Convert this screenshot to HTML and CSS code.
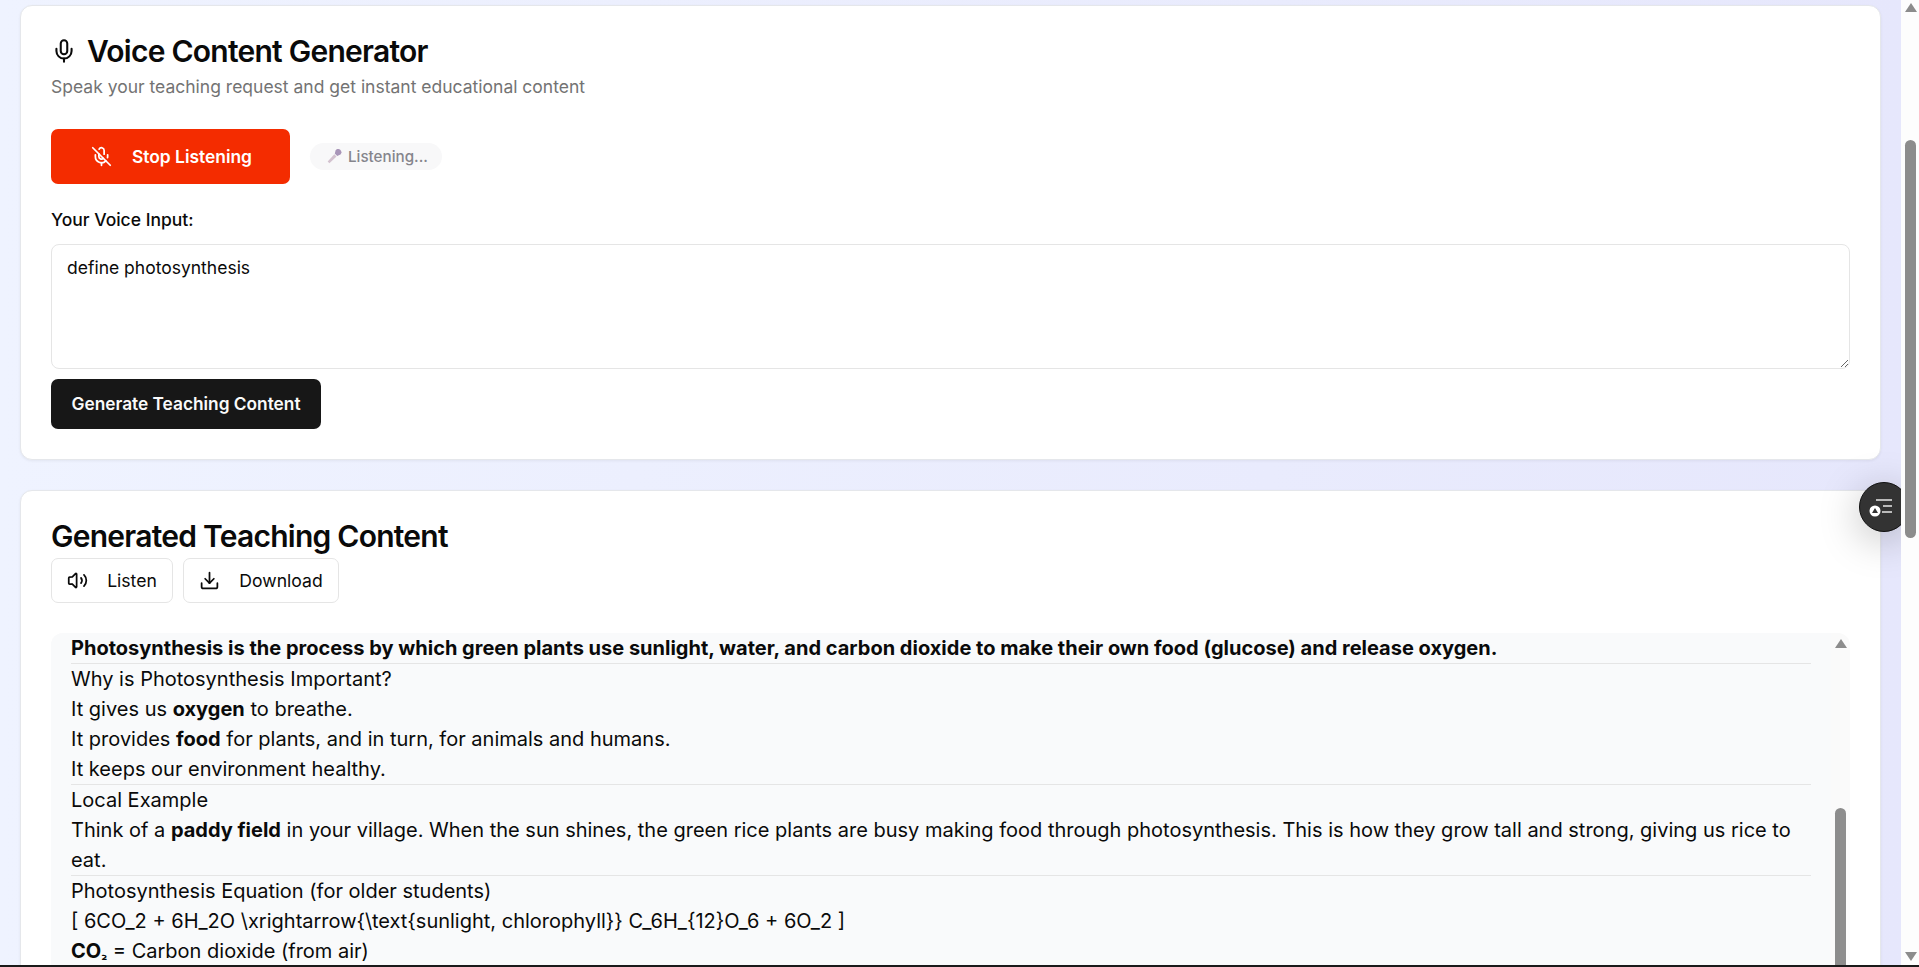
FILE: index.html
```html
<!DOCTYPE html>
<html lang="en">
<head>
  <meta charset="UTF-8" />
  <title>Voice Content Generator</title>
  <link rel="stylesheet" href="styles.css">
</head>
<body>
  <div class="page">
    <main class="content">
      <section class="card card-voice">
        <h1 class="title">
          <svg class="icon-title" viewBox="0 0 24 24"><path d="M12 2a3 3 0 0 0-3 3v7a3 3 0 0 0 6 0V5a3 3 0 0 0-3-3Z"/><path d="M19 10v2a7 7 0 0 1-14 0v-2"/><path d="M12 19v3"/></svg>
          Voice Content Generator
        </h1>
        <p class="subtitle">Speak your teaching request and get instant educational content</p>

        <div class="controls">
          <button class="btn-stop">
            <svg class="icon" viewBox="0 0 24 24"><path d="m2 2 20 20"/><path d="M18.89 13.23A7.12 7.12 0 0 0 19 12v-2"/><path d="M5 10v2a7 7 0 0 0 12 5"/><path d="M15 9.34V5a3 3 0 0 0-5.68-1.33"/><path d="M9 9v3a3 3 0 0 0 5.12 2.12"/><path d="M12 19v3"/></svg>
            Stop Listening
          </button>
          <span class="status">
            <svg class="icon-mic" viewBox="0 0 16 16"><path class="mic-head" d="M9.600 1.200a3.200 3.200 0 0 1 4.900 4.200L11.200 7 8.800 4.600Z"/><path class="mic-body" d="M8.300 5.300l2.200 2.200-7.100 6.700-1.700-1.700Z"/></svg>
            Listening...
          </span>
        </div>

        <label class="field-label" for="voiceInput">Your Voice Input:</label>
        <textarea id="voiceInput" class="voice-input">define photosynthesis</textarea>
        <button class="btn-generate">Generate Teaching Content</button>
      </section>

      <section class="card card-result">
        <h2 class="result-title">Generated Teaching Content</h2>
        <div class="actions">
          <button class="btn-outline btn-listen">
            <svg class="icon" viewBox="0 0 24 24"><path d="M11 4.700a.7.7 0 0 0-1.200-.5L6.400 7.600A1.400 1.400 0 0 1 5.400 8H3a1 1 0 0 0-1 1v6a1 1 0 0 0 1 1h2.400a1.400 1.400 0 0 1 1 .4l3.400 3.400a.7.7 0 0 0 1.200-.5Z"/><path d="M16 9a5 5 0 0 1 0 6"/><path d="M19.400 18.400a9 9 0 0 0 0-12.800"/></svg>
            Listen
          </button>
          <button class="btn-outline btn-download">
            <svg class="icon" viewBox="0 0 24 24"><path d="M12 15V3"/><path d="M21 15v4a2 2 0 0 1-2 2H5a2 2 0 0 1-2-2v-4"/><path d="m7 10 5 5 5-5"/></svg>
            Download
          </button>
        </div>

        <div class="output">
          <div class="output-text">
            <div class="block"><strong>Photosynthesis is the process by which green plants use sunlight, water, and carbon dioxide to make their own food (glucose) and release oxygen.</strong></div>
            <div class="block">
              <p>Why is Photosynthesis Important?</p>
              <p>It gives us <strong>oxygen</strong> to breathe.</p>
              <p>It provides <strong>food</strong> for plants, and in turn, for animals and humans.</p>
              <p>It keeps our environment healthy.</p>
            </div>
            <div class="block">
              <p>Local Example</p>
              <p>Think of a <strong>paddy field</strong> in your village. When the sun shines, the green rice plants are busy making food through photosynthesis. This is how they grow tall and strong, giving us rice to eat.</p>
            </div>
            <div class="block">
              <p>Photosynthesis Equation (for older students)</p>
              <p>[ 6CO_2 + 6H_2O \xrightarrow{\text{sunlight, chlorophyll}} C_6H_{12}O_6 + 6O_2 ]</p>
              <p><strong>CO<span class="sub">₂</span></strong> = Carbon dioxide (from air)</p>
            </div>
          </div>
          <div class="output-scroll">
            <span class="arrow-up"></span>
            <span class="output-thumb"></span>
          </div>
        </div>
      </section>
    </main>

    <div class="page-scroll">
      <span class="arrow-up"></span>
      <span class="page-thumb"></span>
      <span class="arrow-down"></span>
    </div>

    <button class="fab">
      <svg viewBox="0 0 34 34"><path class="fab-lines" d="M9 10h16M16 16h9M15 22h10"/><circle class="fab-dot" cx="8" cy="21" r="5.500"/><path class="fab-tri" d="M8 18l3 5H5Z"/></svg>
    </button>
  </div>
</body>
</html>
```

FILE: styles.css
```css
* {
  margin: 0;
  padding: 0;
  box-sizing: border-box;
}
html, body {
  height: 967px;
  overflow: hidden;
}
body {
  font-family: Inter, "Noto Sans", sans-serif;
  color: #0a0a0a;
  background: #fff;
}
.page {
  position: relative;
  display: flex;
  height: 967px;
  border-bottom: 2px solid #1a1a1a;
  overflow: hidden;
}
.content {
  flex: 1;
  min-width: 0;
  padding: 5px 20px 0 20px;
  background: linear-gradient(90deg, #eff3ff, #e6e7fc);
}
.card {
  background: #fff;
  border: 1px solid #e5e7eb;
  border-radius: 12px;
  box-shadow: 0 1px 3px rgba(0, 0, 0, 0.06);
  padding: 0 30px;
}
.card-voice {
  height: 455px;
  margin-bottom: 30px;
  padding-top: 27px;
}
.card-result {
  height: 600px;
  padding-top: 27px;
}
.title {
  display: flex;
  align-items: center;
  gap: 10px;
  font-size: 30px;
  line-height: 36px;
  font-weight: 600;
  letter-spacing: -0.75px;
}
.icon-title {
  width: 26px;
  height: 26px;
  fill: none;
  stroke: currentColor;
  stroke-width: 1.900;
  stroke-linecap: round;
  stroke-linejoin: round;
}
.icon {
  width: 21px;
  height: 21px;
  fill: none;
  stroke: currentColor;
  stroke-width: 2;
  stroke-linecap: round;
  stroke-linejoin: round;
}
.subtitle {
  margin-top: 5px;
  font-size: 17.5px;
  line-height: 26px;
  color: #737373;
}
.controls {
  display: flex;
  align-items: center;
  gap: 20px;
  margin-top: 29px;
}
button {
  font-family: inherit;
  border: none;
}
.btn-stop {
  display: flex;
  align-items: center;
  justify-content: center;
  gap: 20px;
  width: 239px;
  height: 55px;
  padding-left: 2px;
  border-radius: 7px;
  background: #f42c00;
  color: #fff;
  font-size: 17.4px;
  font-weight: 600;
}
.status {
  display: flex;
  align-items: center;
  gap: 6px;
  height: 27px;
  padding: 0 14px 0 16px;
  border-radius: 14px;
  background: #f8f8f9;
  color: #85858c;
  font-size: 15.2px;
  font-weight: 500;
}
.icon-mic {
  width: 16px;
  height: 16px;
}
.mic-head {
  fill: #a895b8;
}
.mic-body {
  fill: #d3c2cf;
}
.field-label {
  display: block;
  margin-top: 23px;
  font-size: 17.5px;
  line-height: 26px;
  font-weight: 500;
}
.voice-input {
  display: block;
  width: 100%;
  height: 125px;
  margin-top: 11px;
  padding: 11px 15px;
  border: 1px solid #e5e5e5;
  border-radius: 8px;
  font-family: inherit;
  font-size: 17.5px;
  line-height: 24px;
  color: #0a0a0a;
  outline: none;
}
.btn-generate {
  display: block;
  width: 270px;
  height: 50px;
  margin-top: 10px;
  padding-bottom: 1px;
  border-radius: 7px;
  background: #171717;
  color: #fafafa;
  font-size: 17.3px;
  font-weight: 600;
}
.result-title {
  font-size: 30px;
  line-height: 36px;
  font-weight: 600;
  letter-spacing: -0.75px;
}
.actions {
  display: flex;
  gap: 10px;
  margin-top: 4px;
}
.btn-outline {
  display: flex;
  align-items: center;
  justify-content: center;
  gap: 19px;
  height: 45px;
  border: 1px solid #e5e5e5;
  border-radius: 7px;
  background: #fff;
  color: #0a0a0a;
  font-size: 17.6px;
  font-weight: 400;
}
.btn-listen {
  width: 122px;
}
.btn-download {
  width: 156px;
}
.output {
  display: flex;
  height: 420px;
  margin-top: 30px;
  border-radius: 12px 12px 0 0;
  background: #fafafa;
  overflow: hidden;
}
.output-text {
  flex: 1;
  min-width: 0;
  padding: 0 20px;
  background: #f9fafb;
  font-size: 20px;
  line-height: 30px;
}
.block {
  border-bottom: 1px solid #e5e5e5;
}
.sub {
  font-size: 13px;
}
.output-scroll {
  position: relative;
  width: 19px;
  flex-shrink: 0;
}
.output-scroll .arrow-up {
  position: absolute;
  top: 6px;
  left: 4px;
}
.output-thumb {
  position: absolute;
  top: 175px;
  left: 4px;
  width: 11px;
  height: 400px;
  border-radius: 6px;
  background: #8c8c8c;
}
.page-scroll {
  position: relative;
  width: 18px;
  flex-shrink: 0;
  background: #fdfdfd;
}
.page-scroll .arrow-up {
  position: absolute;
  top: 3px;
  left: 4px;
}
.page-scroll .arrow-down {
  position: absolute;
  top: 952px;
  left: 4px;
}
.page-thumb {
  position: absolute;
  top: 140px;
  left: 4px;
  width: 11px;
  height: 398px;
  border-radius: 6px;
  background: #8c8c8c;
}
.arrow-up {
  width: 0;
  height: 0;
  border-left: 6px solid transparent;
  border-right: 6px solid transparent;
  border-bottom: 9px solid #8c8c8c;
}
.arrow-down {
  width: 0;
  height: 0;
  border-left: 6px solid transparent;
  border-right: 6px solid transparent;
  border-top: 9px solid #8c8c8c;
}
.fab {
  position: absolute;
  top: 482px;
  left: 1859px;
  width: 50px;
  height: 50px;
  border: 1px solid #111;
  border-radius: 50%;
  background: #333;
  box-shadow: 0 8px 40px rgba(0, 0, 0, 0.25);
  clip-path: inset(-60px 8px -60px -60px);
  display: flex;
  align-items: center;
  justify-content: center;
}
.fab svg {
  width: 34px;
  height: 34px;
}
.fab-lines {
  fill: none;
  stroke: #e8e8e8;
  stroke-width: 1.500;
}
.fab-dot {
  fill: #fff;
}
.fab-tri {
  fill: #333;
}
```
